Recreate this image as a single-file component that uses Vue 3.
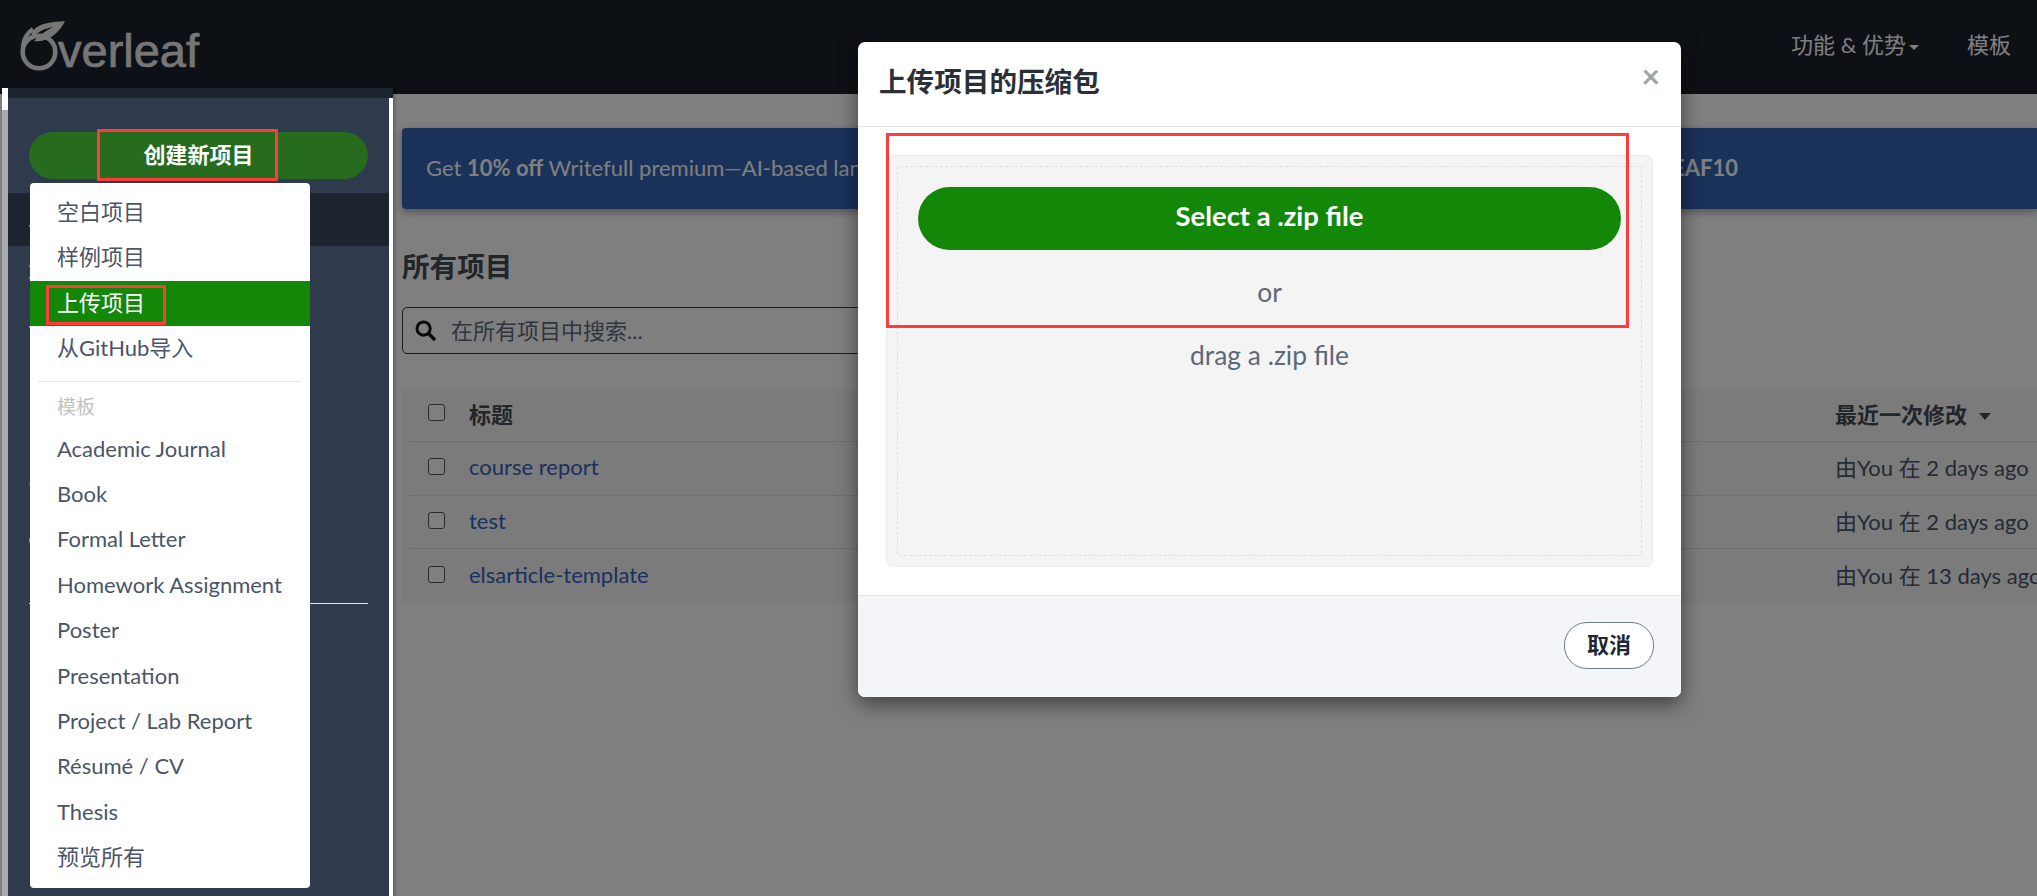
<template>
  <div class="page">
    <header class="topbar">
      <a class="logo">
        <svg class="logo-mark" width="50" height="55" viewBox="18 18 50 55">
          <circle cx="39" cy="52" r="16.3" fill="none" stroke="#ececec" stroke-width="4.6" />
          <path d="M23 52C22 42 26 34 33 29" fill="none" stroke="#ececec" stroke-width="4" />
          <path d="M65 21C52 22 38 23 33 31C31 35 31 38 32 39C36 32 44 29 53 27C46 31 39 35 34 41C44 43 58 36 65 21Z" fill="#ececec" />
        </svg>
        <span class="logo-text">verleaf</span>
      </a>
      <nav class="topnav">
        <a>功能 &amp; 优势<i class="caret"></i></a>
        <a>模板</a>
      </nav>
    </header>

    <main class="content">
      <div class="banner">
        <span>Get <b>10% off</b> Writefull premium—AI-based language feedback and TeXGPT for research writing.</span>
        <span>Use code <b>OVERLEAF10</b></span>
      </div>
      <h1>所有项目</h1>
      <div class="search">
        <svg width="21" height="21" viewBox="0 0 21 21">
          <circle cx="8.6" cy="8.6" r="6.6" fill="none" stroke="#111" stroke-width="3" />
          <path d="M13.5 13.5L19 19" stroke="#111" stroke-width="3.4" stroke-linecap="round" />
        </svg>
        <input placeholder="在所有项目中搜索..." />
      </div>
      <div class="table">
        <div class="row head">
          <span class="check"></span>
          <span class="name">标题</span>
          <span class="when">最近一次修改<i class="sort"></i></span>
        </div>
        <div v-for="p in projects" :key="p.name" class="row">
          <span class="check"></span>
          <a class="name">{{ p.name }}</a>
          <span class="when">由You 在 {{ p.when }}</span>
        </div>
      </div>
    </main>

    <div class="backdrop"></div>

    <aside class="sidebar">
      <div class="side-top"></div>
      <div class="side-body">
        <div class="new-btn">创建新项目</div>
        <div class="side-active"></div>
        <hr />
      </div>
      <!-- края пунктов, которые торчат из-под меню -->
      <i v-for="t in peeks" :key="t.y" class="peek" :style="{ top: t.y + 'px', height: t.h + 'px' }"></i>
    </aside>
    <div class="side-edge"></div>

    <ul class="menu">
      <li v-for="m in menuTop" :key="m" :class="{ on: m === '上传项目' }">{{ m }}</li>
      <li class="divider"></li>
      <li class="menu-head">模板</li>
      <li v-for="m in menuTemplates" :key="m">{{ m }}</li>
    </ul>

    <section class="modal">
      <div class="modal-head">
        <h2>上传项目的压缩包</h2>
        <span class="close">×</span>
      </div>
      <div class="modal-body">
        <div class="drop">
          <div class="drop-inner">
            <div class="select-btn">Select a .zip file</div>
            <div class="or">or</div>
            <div class="drag">drag a .zip file</div>
          </div>
        </div>
      </div>
      <div class="modal-foot">
        <span class="cancel">取消</span>
      </div>
    </section>

    <!-- 红框标注 -->
    <div class="mark mark-new"></div>
    <div class="mark mark-upload"></div>
    <div class="mark mark-zip"></div>
  </div>
</template>

<script setup>
const projects = [
  { name: 'course report', when: '2 days ago' },
  { name: 'test', when: '2 days ago' },
  { name: 'elsarticle-template', when: '13 days ago' }
]

const menuTop = ['空白项目', '样例项目', '上传项目', '从GitHub导入']
const menuTemplates = [
  'Academic Journal',
  'Book',
  'Formal Letter',
  'Homework Assignment',
  'Poster',
  'Presentation',
  'Project / Lab Report',
  'Résumé / CV',
  'Thesis',
  '预览所有'
]

// отступы считаются от верха панели (y = 88)
const peeks = [
  { y: 137, h: 2 },
  { y: 177, h: 2 },
  { y: 189, h: 2 },
  { y: 238, h: 2 },
  { y: 395, h: 1 },
  { y: 450, h: 5 }
]
</script>

<style>
html, body { margin: 0; background: #fff; }
</style>

<style scoped>
.page {
  position: relative;
  width: 2037px;
  height: 896px;
  overflow: hidden;
  background: #fff;
  font-family: Lato, "Noto Sans CJK SC", sans-serif;
  font-size: 22px;
  color: #4a5568;
}

/* шапка */
.topbar {
  height: 94px;
  background: #1b222c;
  display: flex;
  align-items: flex-start;
  justify-content: space-between;
  padding: 18px 26px 0 18px;
  box-sizing: border-box;
}
.logo { display: flex; align-items: flex-start; height: 55px; }
.logo-text {
  font-family: "Liberation Sans", sans-serif;
  font-size: 47px;
  line-height: 52px;
  color: #ececec;
  margin: 7px 0 0 -10px;
  -webkit-text-stroke: 0.7px #ececec;
}
.topnav { display: flex; gap: 48px; color: #fff; font-size: 22px; line-height: 32px; margin-top: 11px; }
.caret {
  display: inline-block;
  border: 5px solid transparent;
  border-top-color: #fff;
  border-bottom: 0;
  margin-left: 3px;
  vertical-align: middle;
}

/* контент */
.content { padding: 34px 0 0 402px; }
.banner {
  height: 81px;
  background: #3463b4;
  border-radius: 4px 0 0 4px;
  color: #fff;
  padding: 0 299px 0 24px;
  line-height: 79px;
  white-space: nowrap;
  display: flex;
  justify-content: space-between;
  box-shadow: 0 3px 8px rgba(0, 0, 0, .35);
}
h1 {
  margin: 38px 0 0;
  font-size: 27.6px;
  line-height: 40px;
  color: #444a52;
}
.search {
  margin-top: 20px;
  width: 900px;
  height: 47px;
  box-sizing: border-box;
  border: 1px solid #2f3a4c;
  border-radius: 5px;
  display: flex;
  align-items: center;
  gap: 13px;
  padding-left: 12px;
}
.search input {
  flex: 1;
  border: 0;
  outline: 0;
  background: none;
  font: inherit;
}
.search input::placeholder { color: #5f6b7c; opacity: 1; }
.table {
  margin-top: 35px;
  background: #f7f7f7;
  border-radius: 4px 0 0 4px;
}
.row {
  height: 53.7px;
  box-sizing: border-box;
  margin-left: 8px;
  padding: 0 0 3px 18px;
  border-bottom: 1px solid #dcdcdc;
  display: flex;
  align-items: center;
  white-space: nowrap;
}
.row:last-child { border-bottom: 0; }
.head { font-weight: 700; color: #444a52; height: 53px; padding-bottom: 5px; }
.check {
  width: 17px;
  height: 17px;
  box-sizing: border-box;
  border: 1.4px solid #555;
  border-radius: 3px;
  background: #fff;
  flex: none;
}
.name { margin-left: 24px; width: 1366px; flex: none; }
a.name { color: #3462c0; }
.when { color: #4a5568; margin-top: -2px; }
.head .when { color: #444a52; margin-top: 0; }
.sort {
  display: inline-block;
  border: 6.5px solid transparent;
  border-top: 7px solid #444a52;
  border-bottom: 0;
  margin-left: 12px;
  vertical-align: middle;
}

.backdrop {
  position: absolute;
  inset: 0;
  background: rgba(0, 0, 0, .5);
}

/* боковая панель */
.sidebar {
  position: absolute;
  left: 8px;
  top: 88px;
  bottom: 0;
  width: 385px;
  display: flex;
  flex-direction: column;
  box-shadow: 2px 0 3px rgba(0, 0, 0, .25);
}
.side-top { height: 10px; background: #1c2430; flex: none; }
.side-body {
  flex: 1;
  background: #2f3a4c;
  border-right: 4px solid #fff;
  padding-top: 34px;
}
.new-btn {
  margin-left: 21px;
  width: 339px;
  height: 47px;
  border-radius: 24px;
  background: #266b1e;
  color: #fff;
  font-weight: 700;
  text-align: center;
  line-height: 45px;
}
.side-active { margin-top: 14px; height: 53px; background: #1c2430; }
.side-body hr {
  margin: 357px 0 0 21px;
  width: 339px;
  border: 0;
  border-top: 1px solid #e6e6e6;
}
.peek {
  position: absolute;
  left: 21px;
  width: 1px;
  background: #5b8fe0;
}
.side-edge {
  position: absolute;
  left: 2px;
  top: 88px;
  bottom: 0;
  width: 6px;
  background: linear-gradient(#fff 22px, #a9abad 22px);
}

/* меню */
.menu {
  position: absolute;
  left: 30px;
  top: 183px;
  width: 280px;
  margin: 0;
  padding: 7px 0 7px;
  box-sizing: border-box;
  height: 705px;
  list-style: none;
  background: #fff;
  border-radius: 4px;
}
.menu li {
  height: 45.4px;
  line-height: 43.4px;
  padding-left: 27px;
  color: #4a5568;
  white-space: nowrap;
}
.menu li.on { background: #138808; color: #fff; }
.menu li.divider { height: 1px; background: #e4e4e4; margin: 9px 9px 1px 8px; padding: 0; }
.menu li.menu-head { color: #c2c2c2; font-size: 19px; height: 50px; line-height: 48px; margin-bottom: -6px; }

/* модальное окно */
.modal {
  position: absolute;
  left: 858px;
  top: 42px;
  width: 823px;
  height: 655px;
  background: #fff;
  border-radius: 7px;
  box-shadow: 0 7px 20px rgba(0, 0, 0, .5);
  display: flex;
  flex-direction: column;
  overflow: hidden;
}
.modal-head {
  height: 85px;
  flex: none;
  box-sizing: border-box;
  border-bottom: 1px solid #e4e4e4;
  display: flex;
  justify-content: space-between;
  padding: 0 21px 0 21px;
}
.modal-head h2 {
  margin: 20px 0 0;
  font-size: 27.6px;
  line-height: 40px;
  color: #2a3038;
}
.close { font-size: 32px; line-height: 40px; margin-top: 14px; color: #a3a3a3; font-weight: 700; }
.modal-body { flex: 1; padding: 28px 28px 0; }
.drop {
  height: 412px;
  box-sizing: border-box;
  background: #f4f4f4;
  border: 1px solid #ebebeb;
  border-radius: 7px;
  padding: 10px;
}
.drop-inner {
  height: 100%;
  box-sizing: border-box;
  border: 1px dashed #dedede;
  border-radius: 3px;
  padding: 20px 20px 0;
  text-align: center;
  color: #5d6879;
}
.select-btn {
  height: 63px;
  border-radius: 32px;
  background: #138808;
  color: #fff;
  font-weight: 700;
  font-size: 27.4px;
  line-height: 57px;
}
.or { margin-top: 26px; line-height: 32px; font-size: 26.4px; }
.drag { margin-top: 31px; line-height: 32px; font-size: 26.4px; }
.modal-foot {
  height: 102px;
  flex: none;
  box-sizing: border-box;
  background: #f4f5f8;
  border-top: 1px solid #e2e4ea;
  display: flex;
  justify-content: flex-end;
  align-items: flex-start;
  padding: 26px 27px 0 0;
}
.cancel {
  width: 90px;
  height: 47px;
  box-sizing: border-box;
  border: 1px solid #6b7a8d;
  border-radius: 23px;
  background: #fff;
  color: #1f2733;
  font-weight: 700;
  text-align: center;
  line-height: 43px;
}

/* красные рамки */
.mark { position: absolute; box-sizing: border-box; border: 3px solid #ff3b3b; }
.mark-new { left: 97px; top: 129px; width: 181px; height: 52px; }
.mark-upload { left: 46px; top: 285px; width: 120px; height: 40px; }
.mark-zip { left: 886px; top: 133px; width: 743px; height: 195px; }
</style>
